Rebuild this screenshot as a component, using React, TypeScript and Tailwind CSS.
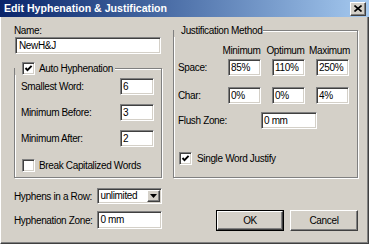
import type { ReactNode } from "react";

// Classic 3D edge helpers
const sunken =
  "bg-white border border-t-[#808080] border-l-[#808080] border-r-white border-b-white shadow-[inset_1px_1px_0_#404040,inset_-1px_-1px_0_#d4d0c8]";
const raised =
  "bg-[#d4d0c8] border border-t-white border-l-white border-r-[#404040] border-b-[#404040] shadow-[inset_-1px_-1px_0_#808080]";

function TextBox({ value, className }: { value: string; className: string }) {
  return (
    <div className={`${sunken} ${className} flex items-center pl-[2px] leading-none whitespace-nowrap overflow-hidden`}>
      {value}
    </div>
  );
}

function CheckBox({ checked }: { checked?: boolean }) {
  return (
    <div className={`${sunken} w-[13px] h-[13px] shrink-0 flex items-center justify-center`}>
      {checked && (
        <svg width="9" height="9" viewBox="0 0 9 9">
          <path d="M1.5 4 L3.5 6.2 L7.6 1.8" fill="none" stroke="#000" strokeWidth="1.9" />
        </svg>
      )}
    </div>
  );
}

function Group({ legend, children, className }: { legend: ReactNode; children: ReactNode; className: string }) {
  return (
    <div
      className={`border border-[#808080] shadow-[inset_1px_1px_0_#fff,1px_1px_0_#fff] ${className}`}
    >
      <div className="-mt-[7px] w-fit bg-[#d4d0c8] flex items-center h-[13px]">{legend}</div>
      {children}
    </div>
  );
}

function Row({ label, value }: { label: string; value: string }) {
  return (
    <div className="flex items-center justify-between h-[17px] pl-[6px] pr-[7px]">
      <span>{label}</span>
      <TextBox value={value} className="w-[34px] h-[17px]" />
    </div>
  );
}

export default function App() {
  return (
    <div className="w-[369px] h-[244px] flex flex-col bg-[#d4d0c8] text-black text-[10px] tracking-[-0.35px] whitespace-nowrap font-['Liberation_Sans',Arial,sans-serif] overflow-hidden">
      {/* title bar */}
      <div className="h-[17px] shrink-0 flex items-center justify-between pl-[4px] pr-[3px] bg-linear-to-r from-[#0a246a] to-[#a6caf0]">
        <span className="text-white font-bold text-[10.6px] tracking-normal leading-none">Edit Hyphenation &amp; Justification</span>
        <div className={`${raised} w-[16px] h-[14px] flex items-center justify-center`}>
          <svg width="8" height="7" viewBox="0 0 8 7">
            <path d="M0.5 0.5 L7.5 6.5 M7.5 0.5 L0.5 6.5" stroke="#000" strokeWidth="1.6" />
          </svg>
        </div>
      </div>

      {/* body */}
      <div className="flex-1 flex pl-[13px] pt-[8px] border-l border-white border-r border-b border-r-[#404040] border-b-[#404040] shadow-[inset_-1px_-1px_0_#808080]">
        {/* left column */}
        <div className="w-[148px] flex flex-col">
          <div className="h-[12px] leading-[12px]">Name:</div>
          <TextBox value="NewH&J" className="ml-[1px] w-[146px] h-[17px] pl-[3px]" />

          <Group
            className="mt-[14px] w-[148px] pb-[4px]"
            legend={
              <div className="ml-[7px] flex items-center gap-[4px] pr-[2px]">
                <CheckBox checked />
                <span>Auto Hyphenation</span>
              </div>
            }
          >
            <div className="flex flex-col gap-[9px] pt-[3px]">
              <Row label="Smallest Word:" value="6" />
              <Row label="Minimum Before:" value="3" />
              <Row label="Minimum After:" value="2" />
            </div>
            <div className="mt-[11px] ml-[7px] flex items-center gap-[4px]">
              <CheckBox />
              <span>Break Capitalized Words</span>
            </div>
          </Group>

          <div className="mt-[10px] flex items-center h-[16px]">
            <span className="w-[84px]">Hyphens in a Row:</span>
            <div className={`${sunken} w-[65px] h-[16px] flex items-center justify-between pl-[2px] pr-[1px]`}>
              <span className="leading-none">unlimited</span>
              <div className={`${raised} w-[13px] h-[12px] flex items-center justify-center`}>
                <svg width="7" height="4" viewBox="0 0 7 4">
                  <path d="M0 0 H7 L3.5 4 Z" fill="#000" />
                </svg>
              </div>
            </div>
          </div>

          <div className="mt-[7px] flex items-center h-[18px]">
            <span className="w-[84px]">Hyphenation Zone:</span>
            <TextBox value="0 mm" className="w-[65px] h-[18px]" />
          </div>
        </div>

        {/* right column */}
        <div className="w-[185px] ml-[11px] pt-[5px] flex flex-col">
          <Group
            className="w-[185px] pb-[11px]"
            legend={<span className="ml-[6px] px-[1px] leading-[13px]">Justification Method</span>}
          >
            <div className="pl-[4px] flex flex-col">
              <div className="mt-[7px] flex h-[13px] leading-[13px]">
                <div className="w-[50px]" />
                {["Minimum", "Optimum", "Maximum"].map((h) => (
                  <div key={h} className="w-[33px] mr-[11px] flex justify-center">
                    {h}
                  </div>
                ))}
              </div>
              <div className="mt-[2px] flex items-center h-[17px]">
                <span className="w-[50px]">Space:</span>
                <TextBox value="85%" className="w-[33px] h-[17px] mr-[11px]" />
                <TextBox value="110%" className="w-[33px] h-[17px] mr-[11px]" />
                <TextBox value="250%" className="w-[33px] h-[17px]" />
              </div>
              <div className="mt-[11px] flex items-center h-[17px]">
                <span className="w-[50px]">Char:</span>
                <TextBox value="0%" className="w-[33px] h-[17px] mr-[11px]" />
                <TextBox value="0%" className="w-[33px] h-[17px] mr-[11px]" />
                <TextBox value="4%" className="w-[33px] h-[17px]" />
              </div>
              <div className="mt-[8px] flex items-center h-[17px]">
                <span className="w-[83px]">Flush Zone:</span>
                <TextBox value="0 mm" className="w-[56px] h-[17px]" />
              </div>
              <div className="mt-[22px] ml-[1px] flex items-center gap-[5px]">
                <CheckBox checked />
                <span>Single Word Justify</span>
              </div>
            </div>
          </Group>

          <div className="mt-[32px] flex justify-end gap-[6px]">
            <div className="border border-black">
              <div className={`${raised} w-[66px] h-[19px] flex items-center justify-center`}>OK</div>
            </div>
            <div className={`${raised} w-[68px] h-[21px] flex items-center justify-center`}>Cancel</div>
          </div>
        </div>
      </div>
    </div>
  );
}
